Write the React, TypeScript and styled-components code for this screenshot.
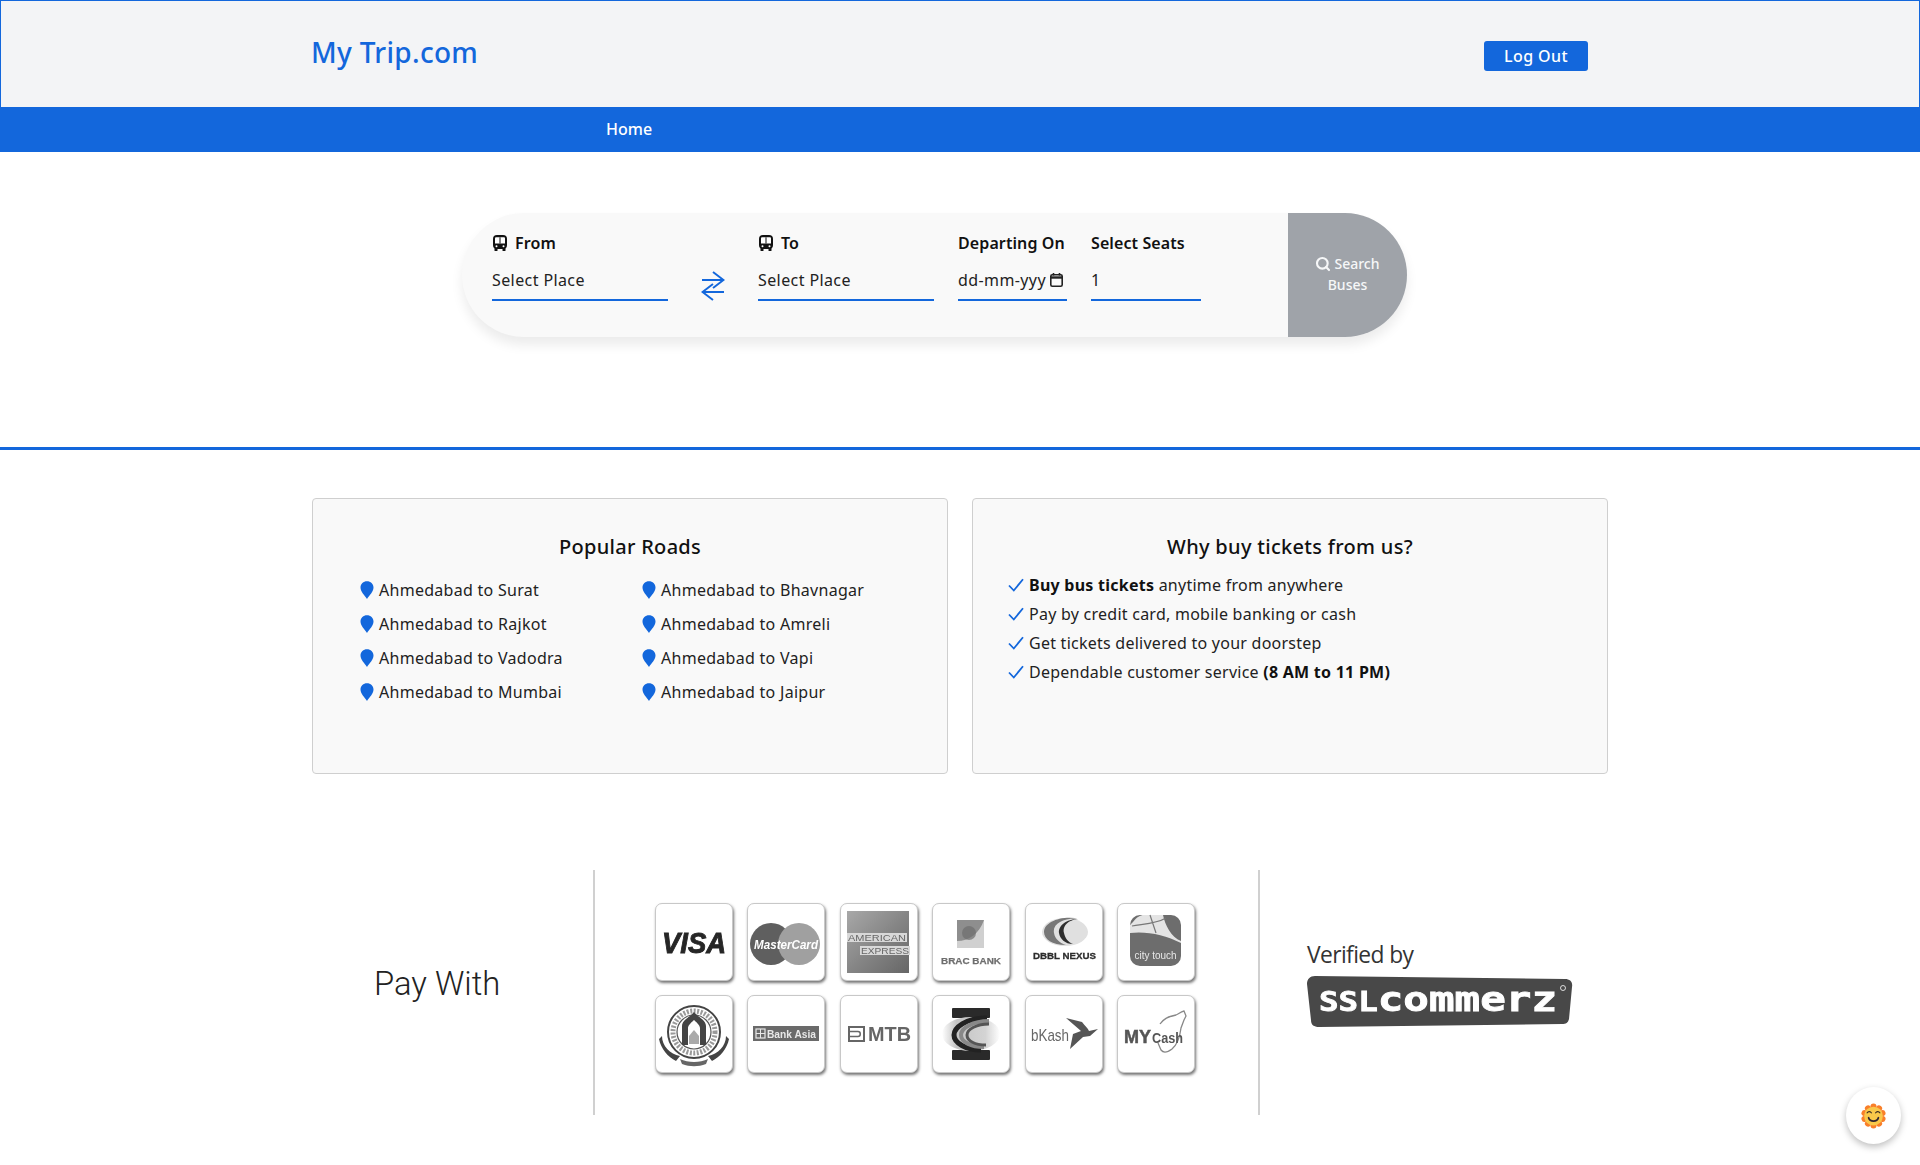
import React from "react";
import styled, { createGlobalStyle } from "styled-components";
import { Search } from "lucide-react";

const BLUE = "#1367dc";

const GlobalStyle = createGlobalStyle`
  html, body { margin: 0; padding: 0; background: #fff; }
  body { font-family: "Noto Sans", "Open Sans", sans-serif; color: #111; }
  * { box-sizing: border-box; }
`;

const Page = styled.div`
  width: 1920px;
  height: 1165px;
  overflow: hidden;
  position: relative;
`;

const Header = styled.header`
  height: 107px;
  background: #f3f4f6;
  border: 1px solid ${BLUE};
  border-bottom: 0;
  display: flex;
  justify-content: space-between;
  padding: 0 331px 0 310px;
`;

const Brand = styled.div`
  font-size: 28px;
  font-weight: 500;
  line-height: 40px;
  margin-top: 31px;
  color: ${BLUE};
  letter-spacing: 0.3px;
`;

const LogOut = styled.button`
  width: 104px;
  height: 30px;
  margin-top: 40px;
  border: 0;
  border-radius: 3px;
  background: ${BLUE};
  color: #fff;
  font: 500 16px "Noto Sans", sans-serif;
  letter-spacing: 0.4px;
  padding: 0;
`;

const Nav = styled.nav`
  height: 45px;
  background: ${BLUE};
  padding: 0 0 2px 606px;
  display: flex;
  align-items: center;
`;

const NavLink = styled.a`
  color: #fff;
  font-size: 16px;
  font-weight: 500;
`;

const SearchSection = styled.section`
  height: 298px;
  padding: 61px 0 0 462px;
  border-bottom: 3px solid ${BLUE};
`;

const SearchPanel = styled.form`
  width: 945px;
  height: 124px;
  display: flex;
  background: #f9f9f9;
  border-radius: 62px;
  box-shadow: 0 8px 12px rgba(0, 0, 0, 0.08);
  padding-left: 30px;
`;

const Field = styled.div<{ $width: number; $gap?: number }>`
  width: ${({ $width }) => $width}px;
  margin-right: ${({ $gap }) => $gap ?? 24}px;
  padding-top: 20px;
`;

const FieldLabel = styled.label`
  display: flex;
  align-items: center;
  gap: 7px;
  height: 20px;
  font-size: 16px;
  font-weight: 600;
  letter-spacing: 0.1px;
  color: #111;
  white-space: nowrap;
`;

const ValueBox = styled.div`
  height: 36px;
  margin-top: 12px;
  border-bottom: 2px solid ${BLUE};
  display: flex;
  align-items: center;
  justify-content: space-between;
  font-size: 16px;
  letter-spacing: 0.4px;
  padding-bottom: 4px;
  color: #222;
  svg { margin-right: 4px; }
`;

const Swap = styled.div`
  width: 90px;
  margin-right: 0;
  padding: 58px 0 0 33px;
  color: ${BLUE};
`;

const SearchButton = styled.button`
  margin-left: auto;
  width: 119px;
  height: 124px;
  border: 0;
  background: #9fa3a9;
  border-radius: 0 62px 62px 0;
  color: #f6f7f8;
  font: 500 14px/21px "Noto Sans", sans-serif;
  padding: 0 10px 2px;
  svg { vertical-align: -3px; margin-right: 3px; }
`;

const Cards = styled.section`
  display: grid;
  grid-template-columns: 636px 636px;
  gap: 24px;
  margin: 48px 0 0 312px;
`;

const Card = styled.article`
  height: 276px;
  background: #f9f9f9;
  border: 1px solid #cfcfcf;
  border-radius: 4px;
  padding-top: 35px;
`;

const CardTitle = styled.h2`
  margin: 0;
  height: 26px;
  font-size: 20px;
  line-height: 26px;
  font-weight: 500;
  letter-spacing: 0.3px;
  text-align: center;
`;

const Roads = styled.ul`
  list-style: none;
  margin: 13px 0 0 47px;
  padding: 0;
  display: grid;
  grid-template-columns: 282px 282px;
  grid-auto-flow: column;
  grid-template-rows: repeat(4, 34px);
`;

const Road = styled.li`
  display: flex;
  align-items: center;
  gap: 5px;
  font-size: 16px;
  letter-spacing: 0.28px;
  color: #222;
`;

const Perks = styled.ul`
  list-style: none;
  margin: 10px 0 0 35px;
  padding: 0;
`;

const Perk = styled.li`
  height: 29px;
  display: flex;
  align-items: center;
  gap: 5px;
  font-size: 16px;
  letter-spacing: 0.25px;
  color: #222;
  white-space: pre;
  b { font-weight: 700; color: #111; }
`;

const PaySection = styled.section`
  margin: 96px 0 0 0;
  height: 245px;
  display: flex;
`;

const PayLabel = styled.div`
  width: 593px;
  padding: 91px 0 0 374px;
  font: 300 32.8px/46px Roboto, sans-serif;
  color: #222;
`;

const LogoColumn = styled.div`
  width: 667px;
  border-left: 2px solid #d0d0d0;
  border-right: 2px solid #d0d0d0;
  padding: 33px 0 0 60px;
`;

const LogoGrid = styled.div`
  display: grid;
  grid-template-columns: repeat(6, 78px);
  grid-auto-rows: 78px;
  column-gap: 14.4px;
  row-gap: 14px;
`;

const LogoTile = styled.div`
  background: #fff;
  border: 1.5px solid #c8c8c8;
  border-radius: 7px;
  box-shadow: 1px 2px 3px rgba(0, 0, 0, 0.55);
  display: flex;
  align-items: center;
  justify-content: center;
  svg { filter: blur(0.45px); display: block; }
`;

const Verified = styled.div`
  padding: 72px 0 0 47px;
`;

const VerifiedText = styled.div`
  font: 22.8px/26px "Open Sans", sans-serif;
  letter-spacing: -0.6px;
  color: #333;
`;

const SslBadge = styled.svg`
  display: block;
  margin-top: 8px;
  filter: blur(0.3px);
`;

const FloatingWidget = styled.button`
  position: absolute;
  right: 19px;
  bottom: 21px;
  width: 55px;
  height: 57px;
  border: 0;
  padding: 0;
  border-radius: 50%;
  background: #fff;
  box-shadow: 0 3px 7px rgba(0, 0, 0, 0.25);
  display: flex;
  align-items: center;
  justify-content: center;
`;

const BusIcon = () => (
  <svg width="16" height="16" viewBox="0 0 16 16">
    <rect x="2.500" y="13" width="3" height="3" rx="0.6" fill="#111" />
    <rect x="10.500" y="13" width="3" height="3" rx="0.6" fill="#111" />
    <rect x="1" y="0" width="14" height="14" rx="4" fill="#111" />
    <path d="M4 2.300h8a1 1 0 0 1 1 1V8.500H3V3.300a1 1 0 0 1 1-1z" fill="#fff" />
    <rect x="7.500" y="2.300" width="1" height="6.200" fill="#111" />
    <circle cx="4.500" cy="11.200" r="1" fill="#fff" />
    <circle cx="11.500" cy="11.200" r="1" fill="#fff" />
  </svg>
);

const Pin = () => (
  <svg width="14" height="18" viewBox="0 0 14 18">
    <path d="M7 18C4.600 14.600.5 10.600.5 6.600.5 2.900 3.400.3 7 .3s6.500 2.600 6.500 6.300c0 4-4.100 8-6.500 11.400z" fill={BLUE} />
  </svg>
);

const CheckIcon = () => (
  <svg width="16" height="14" viewBox="0 0 16 14" fill="none" stroke={BLUE} strokeWidth="1.800">
    <path d="M1 7.500l4.800 5L15 1.200" />
  </svg>
);

const SwapIcon = () => (
  <svg width="24" height="30" viewBox="0 0 24 30" fill="none" stroke="currentColor" strokeWidth="2">
    <path d="M1 9h21.500M12 1l10.500 8L12 17" />
    <path d="M23 21H1.500M12 13L1.500 21 12 29" />
  </svg>
);

const CalendarIcon = () => (
  <svg width="13" height="14" viewBox="0 0 13 14" fill="none" stroke="#222" strokeWidth="1.600">
    <rect x="0.8" y="1.800" width="11.400" height="11.400" rx="1.500" />
    <path d="M1 4.500h11" strokeWidth="2.400" />
    <path d="M3.500 0v2.500M9.500 0v2.500" />
  </svg>
);

const SunIcon = () => (
  <svg width="25" height="26" viewBox="0 0 28 28">
    <g fill="#f97f2a">
      {[0, 36, 72, 108, 144, 180, 216, 252, 288, 324].map((a) => (
        <circle key={a} cx="14" cy="3.400" r="3.400" transform={`rotate(${a} 14 14)`} />
      ))}
    </g>
    <circle cx="14" cy="14" r="10.500" fill="#f9c84a" />
    <path d="M6.500 11c1.500-2.500 4-2.500 5.500 0M16 11c1.500-2.500 4-2.500 5.500 0" fill="none" stroke="#3a2a20" strokeWidth="1.200" />
    <path d="M8.500 16c1.500 5 9.500 5 11 0" fill="none" stroke="#2f2430" strokeWidth="2" strokeLinecap="round" />
  </svg>
);

const tileText = { fontFamily: "Liberation Sans, sans-serif" };

const logos: { name: string; art: React.ReactNode }[] = [
  {
    name: "VISA",
    art: (
      <svg width="72" height="72" viewBox="0 0 72 72">
        <text x="36" y="47" textAnchor="middle" fontSize="29" fontWeight="700" fontStyle="italic" fill="#262626" stroke="#262626" strokeWidth="0.900" style={tileText} textLength="64" lengthAdjust="spacingAndGlyphs">VISA</text>
      </svg>
    ),
  },
  {
    name: "MasterCard",
    art: (
      <svg width="72" height="72" viewBox="0 0 72 72">
        <circle cx="21" cy="38" r="21" fill="#5f5f5f" />
        <circle cx="49" cy="38" r="21" fill="#a0a0a0" />
        <text x="36" y="42.500" textAnchor="middle" fontSize="12" fontWeight="700" fontStyle="italic" fill="#fff" style={tileText} textLength="64" lengthAdjust="spacingAndGlyphs">MasterCard</text>
      </svg>
    ),
  },
  {
    name: "American Express",
    art: (
      <svg width="72" height="72" viewBox="0 0 72 72">
        <defs>
          <linearGradient id="amex" x1="0" y1="0" x2="1" y2="1">
            <stop offset="0" stopColor="#a8a8a8" />
            <stop offset="0.5" stopColor="#868686" />
            <stop offset="1" stopColor="#666" />
          </linearGradient>
        </defs>
        <rect x="4" y="5" width="62" height="62" fill="url(#amex)" />
        <rect x="4" y="27" width="60" height="9" fill="#d8d8d8" />
        <rect x="17" y="40" width="50" height="9" fill="#d8d8d8" />
        <text x="34" y="35" textAnchor="middle" fontSize="9.500" fill="#666" style={tileText} textLength="58" lengthAdjust="spacingAndGlyphs">AMERICAN</text>
        <text x="42" y="48" textAnchor="middle" fontSize="9.500" fill="#666" style={tileText} textLength="48" lengthAdjust="spacingAndGlyphs">EXPRESS</text>
      </svg>
    ),
  },
  {
    name: "BRAC BANK",
    art: (
      <svg width="72" height="72" viewBox="0 0 72 72">
        <rect x="22" y="14" width="27" height="28" fill="#8e8e8e" />
        <path d="M22 35c12 0 22-7 27-21v28H22z" fill="#d0d0d0" />
        <circle cx="34" cy="27" r="7" fill="#6e6e6e" opacity="0.700" />
        <text x="36" y="58" textAnchor="middle" fontSize="9.500" fontWeight="700" fill="#6e6e6e" stroke="#6e6e6e" strokeWidth="0.250" style={tileText} textLength="60" lengthAdjust="spacingAndGlyphs">BRAC BANK</text>
      </svg>
    ),
  },
  {
    name: "DBBL Nexus",
    art: (
      <svg width="72" height="72" viewBox="0 0 72 72">
        <ellipse cx="37" cy="26" rx="23" ry="14" fill="#e0e0e0" />
        <path d="M52 13c-14-2-28 4-26 14 1 6 6 10 12 12-14 0-22-6-22-13 0-10 18-17 36-13z" fill="#777" />
        <path d="M52 13c-10 0-18 6-16 14 1 5 4 9 9 11-8 0-13-5-14-11-1-8 9-15 21-14z" fill="#2e2e2e" />
        <text x="36.500" y="53" textAnchor="middle" fontSize="9.500" fontWeight="700" fill="#2c2c2c" stroke="#2c2c2c" strokeWidth="0.300" style={tileText} textLength="63" lengthAdjust="spacingAndGlyphs">DBBL NEXUS</text>
      </svg>
    ),
  },
  {
    name: "city touch",
    art: (
      <svg width="72" height="72" viewBox="0 0 72 72">
        <rect x="10" y="9" width="51" height="51" rx="10" fill="#6d6d6d" />
        <path d="M13 16c4-5 7-7 11-7h19c2 10 8 22 18 26v2c-16-8-34-12-51-10V19z" fill="#e4e4e4" />
        <path d="M30 9l6 18M12 20c10-2 24-2 34-8" fill="none" stroke="#777" strokeWidth="1.200" />
        <text x="35.500" y="53" textAnchor="middle" fontSize="10.500" fill="#e8e8e8" style={tileText} textLength="42" lengthAdjust="spacingAndGlyphs">city touch</text>
      </svg>
    ),
  },
  {
    name: "Islami Bank",
    art: (
      <svg width="72" height="72" viewBox="0 0 72 72">
        <circle cx="36" cy="34" r="26" fill="none" stroke="#444" strokeWidth="2" />
        <circle cx="36" cy="34" r="21" fill="none" stroke="#999" strokeWidth="5" strokeDasharray="2 1.500" />
        <circle cx="36" cy="34" r="17" fill="#fff" stroke="#555" strokeWidth="1.200" />
        <path d="M24 47V28c0-6 8-9 12-14 4 5 12 8 12 14v19h-6V30c0-3-4-6-6-8-2 2-6 5-6 8v17z" fill="#444" />
        <path d="M31 46v-8l5-6 5 6v8z" fill="#aaa" />
        <path d="M4 38c0 10 8 18 18 20l-4 5c-8-4-15-12-17-22zM68 38c0 10-8 18-18 20l4 5c8-4 15-12 17-22z" fill="#444" />
        <path d="M22 61c8 4 20 4 28 0l-2 5c-8 3-16 3-24 0z" fill="#666" />
      </svg>
    ),
  },
  {
    name: "Bank Asia",
    art: (
      <svg width="72" height="72" viewBox="0 0 72 72">
        <rect x="3" y="28" width="66" height="15" fill="#6a6a6a" />
        <rect x="6" y="31" width="9" height="9" fill="none" stroke="#e8e8e8" strokeWidth="1.200" />
        <path d="M10.500 31v9M6 35.500h9" stroke="#e8e8e8" strokeWidth="1" />
        <text x="17" y="39.500" fontSize="11" fontWeight="700" fill="#e8e8e8" style={tileText} textLength="49" lengthAdjust="spacingAndGlyphs">Bank Asia</text>
      </svg>
    ),
  },
  {
    name: "MTB",
    art: (
      <svg width="72" height="72" viewBox="0 0 72 72">
        <rect x="6" y="29" width="15" height="14" fill="#fff" stroke="#666" strokeWidth="2" />
        <path d="M7 33.500h8c3 0 3 5 0 5H7" fill="none" stroke="#666" strokeWidth="1.500" />
        <text x="46.500" y="43" textAnchor="middle" fontSize="20.500" fontWeight="700" fill="#666" style={tileText} textLength="43" lengthAdjust="spacingAndGlyphs">MTB</text>
      </svg>
    ),
  },
  {
    name: "Rocket",
    art: (
      <svg width="72" height="72" viewBox="0 0 72 72">
        <defs>
          <linearGradient id="rocketBand" x1="0" y1="0" x2="1" y2="0">
            <stop offset="0" stopColor="#fff" />
            <stop offset="0.25" stopColor="#c4c4c4" />
            <stop offset="0.75" stopColor="#d4d4d4" />
            <stop offset="1" stopColor="#fff" />
          </linearGradient>
        </defs>
        <rect x="17" y="10" width="38" height="10" rx="1" fill="#2a2a2a" />
        <rect x="17" y="52" width="38" height="10" rx="1" fill="#2a2a2a" />
        <ellipse cx="36" cy="36" rx="29" ry="17" fill="url(#rocketBand)" />
        <g fill="none">
          <path d="M52 20C30 20 19 30 19 37c0 8 12 15 27 15" stroke="#222" strokeWidth="5" />
          <path d="M54 23C38 23 26 30 26 37c0 7 10 12 23 12" stroke="#888" strokeWidth="4" />
          <path d="M54 26C42 26 32 31 32 37c0 6 8 10 19 10" stroke="#555" strokeWidth="3" />
        </g>
      </svg>
    ),
  },
  {
    name: "bKash",
    art: (
      <svg width="72" height="72" viewBox="0 0 72 72">
        <text x="3" y="43" fontSize="17" fill="#666" style={tileText} textLength="38" lengthAdjust="spacingAndGlyphs">bKash</text>
        <path d="M38 20l16 4c3 4 6 6 7 9l9-2-8 7-7 1-13 12 3-15 8-3z" fill="#555" />
      </svg>
    ),
  },
  {
    name: "MYCash",
    art: (
      <svg width="72" height="72" viewBox="0 0 72 72">
        <path d="M40 26c4-6 10-8 16-9 3-1 4-3 8-4l2 5-2 4-3 8c-1 8-3 16-9 21-4 3-8 5-11 1l-3-7" fill="none" stroke="#888" strokeWidth="1.300" />
        <text x="4" y="45" fontSize="18" fontWeight="700" fill="#555" stroke="#555" strokeWidth="0.500" style={tileText}>MY</text>
        <text x="32" y="45" fontSize="14" fontWeight="700" fill="#555" style={tileText} textLength="31" lengthAdjust="spacingAndGlyphs">Cash</text>
      </svg>
    ),
  },
];

const roadCities = ["Surat", "Rajkot", "Vadodra", "Mumbai", "Bhavnagar", "Amreli", "Vapi", "Jaipur"];

export default function App() {
  return (
    <Page>
      <GlobalStyle />
      <Header>
        <Brand>My Trip.com</Brand>
        <LogOut type="button">Log Out</LogOut>
      </Header>
      <Nav>
        <NavLink>Home</NavLink>
      </Nav>

      <SearchSection>
        <SearchPanel>
          <Field $width={176} $gap={0}>
            <FieldLabel><BusIcon />From</FieldLabel>
            <ValueBox>Select Place</ValueBox>
          </Field>
          <Swap><SwapIcon /></Swap>
          <Field $width={176}>
            <FieldLabel><BusIcon />To</FieldLabel>
            <ValueBox>Select Place</ValueBox>
          </Field>
          <Field $width={109}>
            <FieldLabel>Departing On</FieldLabel>
            <ValueBox>dd-mm-yyy<CalendarIcon /></ValueBox>
          </Field>
          <Field $width={110} $gap={0}>
            <FieldLabel>Select Seats</FieldLabel>
            <ValueBox>1</ValueBox>
          </Field>
          <SearchButton type="button"><Search size={16} strokeWidth={3.2} />Search Buses</SearchButton>
        </SearchPanel>
      </SearchSection>

      <Cards>
        <Card>
          <CardTitle>Popular Roads</CardTitle>
          <Roads>
            {roadCities.map((city) => (
              <Road key={city}><Pin />Ahmedabad to {city}</Road>
            ))}
          </Roads>
        </Card>
        <Card>
          <CardTitle>Why buy tickets from us?</CardTitle>
          <Perks>
            <Perk><CheckIcon /><span><b>Buy bus tickets</b> anytime from anywhere</span></Perk>
            <Perk><CheckIcon /><span>Pay by credit card, mobile banking or cash</span></Perk>
            <Perk><CheckIcon /><span>Get tickets delivered to your doorstep</span></Perk>
            <Perk><CheckIcon /><span>Dependable customer service <b>(8 AM to 11 PM)</b></span></Perk>
          </Perks>
        </Card>
      </Cards>

      <PaySection>
        <PayLabel>Pay With</PayLabel>
        <LogoColumn>
          <LogoGrid>
            {logos.map((logo) => (
              <LogoTile key={logo.name} aria-label={logo.name}>{logo.art}</LogoTile>
            ))}
          </LogoGrid>
        </LogoColumn>
        <Verified>
          <VerifiedText>Verified by</VerifiedText>
          <SslBadge width="266" height="52" viewBox="0 0 266 52">
            <path d="M8 0l250 3c5 0 8 3 7 8l-3 32c-1 4-3 5-7 5L12 51c-5 0-8-2-8-7L0 8c0-5 3-8 8-8z" fill="#484848" />
            <text x="12" y="35" fontFamily="DejaVu Sans Mono, monospace" fontWeight="700" fontSize="34" fill="#fff" stroke="#fff" strokeWidth="0.800" textLength="238" lengthAdjust="spacingAndGlyphs"><tspan fontSize="26">SSL</tspan>commerz</text>
            <circle cx="256" cy="12" r="2.500" fill="none" stroke="#fff" strokeWidth="0.800" />
          </SslBadge>
        </Verified>
      </PaySection>

      <FloatingWidget type="button" aria-label="Feedback"><SunIcon /></FloatingWidget>
    </Page>
  );
}
